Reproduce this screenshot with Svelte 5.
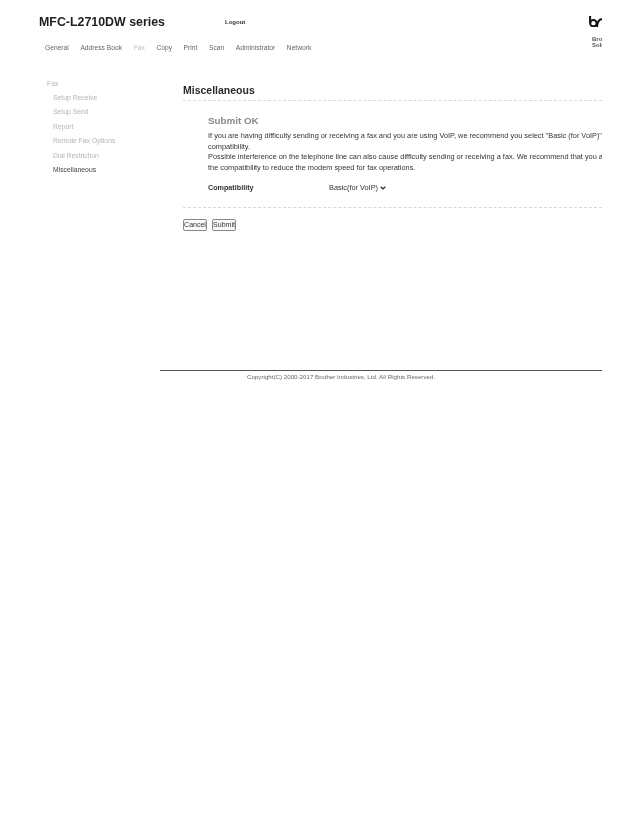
<script>
  const nav = [
    { label: 'General', cls: '' },
    { label: 'Address Book', cls: '' },
    { label: 'Fax', cls: 'current' },
    { label: 'Copy', cls: '' },
    { label: 'Print', cls: '' },
    { label: 'Scan', cls: '' },
    { label: 'Administrator', cls: '' },
    { label: 'Network', cls: '' }
  ];
  const side = ['Setup Receive', 'Setup Send', 'Report', 'Remote Fax Options', 'Dial Restriction'];
</script>

<div class="page">
  <header class="top">
    <div class="title-row">
      <h1>MFC-L2710DW series</h1>
      <a class="logout" href="#logout">Logout</a>
    </div>
    <div class="brand">
      <svg class="logo" viewBox="0 0 14 12" aria-hidden="true">
        <path d="M1.1 0v7.8" fill="none" stroke="#111" stroke-width="2.2"/>
        <circle cx="4.7" cy="7.8" r="3.5" fill="none" stroke="#111" stroke-width="2.2"/>
        <path d="M8.6 12C9 6.8 10.4 3.8 14 3.3" fill="none" stroke="#111" stroke-width="2.2"/>
      </svg>
      <div class="brand-text">Brother<br />Solutions Center</div>
    </div>
  </header>

  <nav class="tabs">
    {#each nav as item}
      <a href="#tab" class={item.cls}>{item.label}</a>
    {/each}
  </nav>

  <div class="columns">
    <aside class="side">
      <div class="side-head">Fax</div>
      <ul>
        {#each side as s}
          <li>{s}</li>
        {/each}
        <li class="active">Miscellaneous</li>
      </ul>
    </aside>

    <main class="content">
      <h2>Miscellaneous</h2>
      <div class="inner">
        <h3>Submit OK</h3>
        <p>If you are having difficulty sending or receiving a fax and you are using VoIP, we recommend you select "Basic (for VoIP)" for the compatibility.<br />Possible interference on the telephone line can also cause difficulty sending or receiving a fax. We recommend that you adjust the compatibility to reduce the modem speed for fax operations.</p>
        <div class="field">
          <span class="field-label">Compatibility</span>
          <select>
            <option>Basic(for VoIP)</option>
            <option>Normal</option>
            <option>High</option>
          </select>
          <svg class="chev" viewBox="0 0 6 4" aria-hidden="true">
            <path d="M.7.8 3 3 5.3.8" fill="none" stroke="#222" stroke-width="1.2"/>
          </svg>
        </div>
      </div>
      <div class="actions">
        <button type="button">Cancel</button>
        <button type="button">Submit</button>
      </div>
    </main>
  </div>

  <footer class="foot">
    <div class="copy">Copyright(C) 2000-2017 Brother Industries, Ltd. All Rights Reserved.</div>
  </footer>
</div>

<style>
  :global(body) {
    margin: 0;
    background: #fff;
  }
  .page {
    width: 602px;
    height: 817px;
    overflow: hidden;
    font-family: "Liberation Sans", Arial, sans-serif;
    color: #333;
    box-sizing: border-box;
    padding-top: 13px;
    will-change: transform;
  }
  .top {
    display: flex;
    justify-content: space-between;
    height: 30px;
  }
  .title-row {
    display: flex;
    align-items: flex-start;
    padding: 1px 0 0 39px;
  }
  h1 {
    margin: 0;
    font-size: 12.4px;
    line-height: 16px;
    font-weight: 700;
    color: #1e1e1e;
    width: 186px;
    white-space: nowrap;
  }
  .logout {
    font-size: 6px;
    line-height: 16px;
    font-weight: 700;
    color: #333;
    text-decoration: none;
  }
  .brand {
    width: 13px;
    flex: none;
    align-self: flex-start;
    overflow: hidden;
    white-space: nowrap;
    padding-top: 3px;
  }
  .logo {
    display: block;
    width: 13px;
    height: 11px;
  }
  .brand-text {
    font-size: 6px;
    line-height: 6px;
    font-weight: 700;
    color: #555;
    margin-top: 9px;
    padding-left: 3px;
  }
  .tabs {
    display: flex;
    gap: 11.6px;
    padding-left: 45px;
    height: 36px;
    font-size: 6.7px;
    line-height: 10px;
  }
  .tabs a {
    color: #666;
    text-decoration: none;
    white-space: nowrap;
  }
  .tabs a.current {
    color: #bbb;
  }
  .columns {
    display: flex;
    height: 291px;
  }
  .side {
    width: 183px;
    flex: none;
    box-sizing: border-box;
    padding: 0 0 0 47px;
    font-size: 6.8px;
    color: #b4b4b4;
  }
  .side-head {
    line-height: 10px;
  }
  .side ul {
    list-style: none;
    margin: 2px 0 0;
    padding: 0 0 0 6px;
  }
  .side li {
    line-height: 14.4px;
    white-space: nowrap;
  }
  .side li.active {
    color: #444;
  }
  .content {
    flex: 1;
    min-width: 0;
    padding-top: 4px;
  }
  h2 {
    margin: 0;
    font-size: 10.5px;
    line-height: 14px;
    font-weight: 700;
    color: #2a2a2a;
    padding-bottom: 3px;
    border-bottom: 1px dashed #d8d8d8;
  }
  .inner {
    padding: 13px 0 0 25px;
    height: 93px;
    border-bottom: 1px dashed #d8d8d8;
  }
  h3 {
    margin: 0 0 4px;
    font-size: 9.8px;
    line-height: 13px;
    font-weight: 700;
    color: #888;
  }
  p {
    margin: 0;
    font-size: 7.36px;
    line-height: 10.6px;
    width: 420px;
    color: #333;
  }
  .field {
    display: flex;
    align-items: center;
    margin-top: 9px;
  }
  .field-label {
    width: 121px;
    font-size: 7.2px;
    font-weight: 700;
    color: #333;
  }
  select {
    appearance: none;
    font-family: inherit;
    font-size: 7.35px;
    color: #333;
    background: #fff;
    border: 0;
    padding: 0;
    height: 11px;
  }
  .chev {
    display: block;
    width: 6px;
    height: 4px;
    margin-left: 2px;
  }
  .actions {
    display: flex;
    gap: 5px;
    margin-top: 11px;
  }
  button {
    font-family: inherit;
    font-size: 7px;
    line-height: 10px;
    color: #333;
    background: #fafafa;
    border: 1px solid #888;
    border-radius: 2px;
    padding: 0;
    width: 24px;
    height: 12px;
  }
  .foot {
    margin-left: 160px;
    border-top: 1px solid #555;
    padding: 1px 0 0 87px;
    font-size: 6.2px;
    line-height: 10px;
    color: #666;
    white-space: nowrap;
  }
</style>
